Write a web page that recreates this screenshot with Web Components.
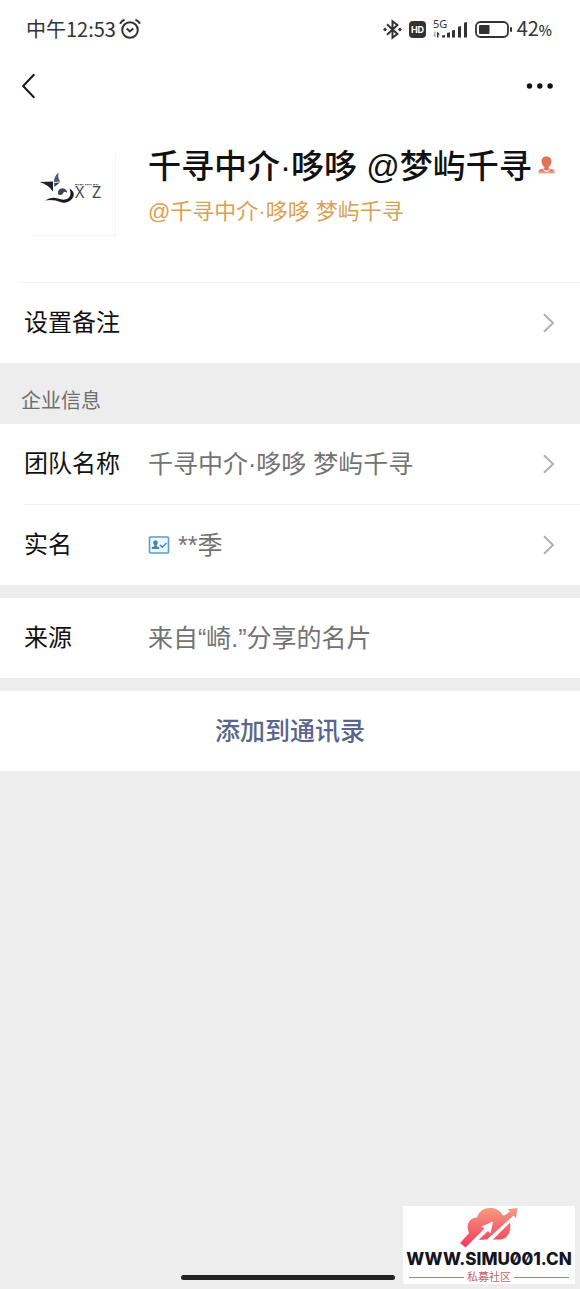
<!DOCTYPE html>
<html lang="zh-CN">
<head>
<meta charset="utf-8">
<meta name="viewport" content="width=device-width, initial-scale=1">
<title>联系人资料</title>
<style>
  body {
    margin: 0;
    background: #ededed;
    color: #111;
    font-family: "Liberation Sans", "Noto Sans CJK SC", sans-serif;
  }
</style>
</head>
<body>
<contact-page></contact-page>

<script>
  class Base extends HTMLElement {
    constructor() {
      super();
      this.attachShadow({ mode: 'open' }).innerHTML = this.view();
    }
    view() { return ''; }
  }

  customElements.define('status-bar', class extends Base {
    view() {
      return `
<style>
  :host { display: flex; align-items: center; height: 58px; padding: 0 28px 0 26px; font-family: "Noto Sans CJK SC", sans-serif; font-size: 20px; line-height: 28px; color: #333; }
  svg { display: block; flex: none; }
  .alarm { margin-left: 3px; }
  .right { display: flex; align-items: center; gap: 7px; margin-left: auto; }
  .charge { margin-left: -2px; }
  small { font-size: 14px; font-weight: 500; }
</style>
<span>中午12:53</span>
<svg class="alarm" width="22" height="22" viewBox="0 0 22 22" fill="none" stroke="#333" stroke-width="2">
  <circle cx="11" cy="12" r="7.8"/><path d="M7.8 10.6 10.8 13.4 14.3 10.4M1 5.8Q2.6 3 5.6 1.7M21 5.8Q19.4 3 16.4 1.7"/>
</svg>
<div class="right">
  <svg width="19" height="21" viewBox="0 0 19 21" fill="none" stroke="#333" stroke-width="2">
    <path d="M4 5.3 14.4 15 9.5 18.8V2.2L14.4 6 4 15.7"/>
    <path fill="#333" stroke="none" d="M2 8.4 4.1 10.5 2 12.6 0 10.5ZM17 8.4l2 2.1-2 2.1-2.1-2.1Z"/>
  </svg>
  <svg width="17" height="17" viewBox="0 0 17 17">
    <rect width="17" height="17" rx="4" fill="#333"/>
    <text x="8.5" y="12" text-anchor="middle" font-family="Inter, sans-serif" font-weight="700" font-size="9" fill="#fff">HD</text>
  </svg>
  <svg width="35" height="28" viewBox="0 0 35 28" fill="#333">
    <text x="0" y="13" font-family="Noto Sans, sans-serif" font-size="11">5G</text>
    <path d="M9 22.500V20.500l3-.5v2.500ZM14 22.500v-4.500l3-.8v5.300ZM19 22.500v-7l3-.8v7.800ZM25 22.500V11.700l3-.8v11.600ZM31 22.500V7.800l3-.8v15.500Z"/>
    <path d="M4 22.500v-6l3 3H5.500v3Z"/><path fill="#999" d="M2.500 16.500v6L0 20h1.300v-3.500Z"/>
  </svg>
  <svg width="37" height="17" viewBox="0 0 37 17">
    <rect x="1" y="1" width="32" height="15" rx="4.500" fill="none" stroke="#333" stroke-width="1.800"/>
    <rect x="4" y="4" width="10.500" height="9" rx="1" fill="#333"/><rect x="35" y="6" width="2" height="5" rx="1" fill="#333"/>
  </svg>
  <span class="charge">42<small>%</small></span>
</div>`;
    }
  });

  customElements.define('nav-bar', class extends Base {
    view() {
      return `
<style>
  :host { display: flex; justify-content: space-between; align-items: center; height: 56px; padding: 0 20px 0 16px; }
  button { display: grid; place-items: center; height: 44px; padding: 0 6px; border: 0; background: none; }
  svg { display: block; }
</style>
<button type="button" aria-label="返回"><svg width="14" height="26" viewBox="0 0 14 26" fill="none" stroke="#1a1a1a" stroke-width="2"><path d="M12.300 1.200 1.200 13l11.100 11.800"/></svg></button>
<button type="button" aria-label="更多"><svg width="28" height="6" viewBox="0 0 28 6" fill="#111"><circle cx="3.500" cy="3" r="2.700"/><circle cx="13.800" cy="3" r="2.700"/><circle cx="24.100" cy="3" r="2.700"/></svg></button>`;
    }
  });

  customElements.define('profile-avatar', class extends Base {
    view() {
      return `
<style>
  :host { display: block; width: 86px; height: 84px; box-sizing: border-box; border: 1px solid #fff; border-right-color: #f6f6f6; border-bottom-color: #f6f6f6; }
  svg { display: block; }
</style>
<svg width="84" height="82" viewBox="0 0 84 82" role="img" aria-label="头像">
  <path fill="#1d222c" d="M8.500 29 22 28.500V38.500Q17 31.500 8.500 29Z"/>
  <path fill="#4d5c6c" d="M27.500 19.500Q26.500 26 29.500 28.500L23 29V27.500Q23.500 23 27.500 19.500Z"/>
  <path fill="#3c4856" d="M23 30 29 29.300 23.500 34Z"/>
  <path fill="#3b4654" d="M27 41Q26.500 35.500 31.500 35.300 36 36 36.200 40 33 37 31.300 41.600 28.200 42.600 27 41Z"/>
  <path fill="#171b23" d="M14 47.500Q20 43.500 27 45.500 33 47.800 37 45.500 41 42.500 38.500 35.500 44 38.500 42.500 43.500 39 50.500 31 49.500 22 46 14 47.500Z"/>
  <g fill="#3f4650" font-family="Noto Sans, sans-serif"><text x="44" y="45" font-size="16">X</text><text x="61" y="45" font-size="16">Z</text></g>
  <g stroke="#6b717a" stroke-width="1.300"><path stroke-dasharray="2 .5" d="M44 31.700h8.500"/><path stroke-dasharray="1.500 .6" d="M54 31.700h7"/><path stroke-dasharray="2 .5" d="M62 31.700h5.500"/></g>
</svg>`;
    }
  });

  customElements.define('profile-header', class extends Base {
    view() {
      return `
<style>
  :host { display: flex; gap: 32px; height: 168px; padding: 0 0 0 30px; }
  profile-avatar { margin-top: 38px; flex: none; }
  .info { flex: 1; min-width: 0; margin-top: 30px; white-space: nowrap; }
  h1 { display: flex; align-items: center; gap: 6px; margin: 0; font-size: 33px; line-height: 46px; font-weight: 500; }
  p { margin: 7px 0 0; font-size: 22px; line-height: 30px; color: #dca052; }
  svg { display: block; flex: none; margin-bottom: 4px; }
</style>
<profile-avatar></profile-avatar>
<div class="info">
  <h1><slot name="name"></slot>
    <svg width="17" height="18" viewBox="0 0 17 18" fill="#e2725a" role="img" aria-label="个人"><path d="M8.500.5c3 0 5 2 5 4.800 0 2.500-1.200 4.500-2.800 5.800v1.300l4.300 1.100q1.500.5 1.500 2.200H.5q0-1.700 1.500-2.200l4.300-1.100v-1.300C4.700 9.800 3.500 7.800 3.500 5.300 3.500 2.500 5.500.5 8.500.5Z"/><path d="M.5 16.300h16v1h-16z"/><path fill="#fff" d="M4.500 13.400h1.400l2.600 1.400 2.600-1.400h1.400l-3 2.300h-2z"/></svg>
  </h1>
  <p><slot name="alias"></slot></p>
</div>`;
    }
  });

  customElements.define('info-row', class extends Base {
    static get observedAttributes() { return ['label']; }
    attributeChangedCallback(n, o, v) { this.shadowRoot.querySelector('.label').textContent = v; }
    view() {
      return `
<style>
  :host { display: block; background: #fff; }
  .row { display: flex; align-items: center; box-sizing: border-box; width: 100%; height: 80px; padding: 0 25px 0 24px; border: 0; background: none; font: inherit; font-size: 24px; line-height: 36px; color: #111; text-align: left; }
  .label { flex: none; width: 124px; }
  .value { flex: 1; display: flex; align-items: center; gap: 8px; font-size: 25px; color: #737373; }
  svg { display: block; flex: none; }
  :host([plain]) svg { display: none; }
</style>
<button type="button" class="row">
  <span class="label"></span><span class="value"><slot></slot></span>
  <svg width="13" height="20" viewBox="0 0 13 20" fill="none" stroke="#b0b0b0" stroke-width="2"><path d="m2 1.300 9 8.700-9 8.700"/></svg>
</button>`;
    }
  });

  customElements.define('id-badge', class extends Base {
    view() {
      return `
<style>:host { display: block; } svg { display: block; }</style>
<svg width="22" height="18" viewBox="0 0 22 18" role="img" aria-label="已实名">
  <rect x="1.500" y="1" width="19" height="16" rx="1" fill="#eff8fe" stroke="#5f9bc6" stroke-width="1.600"/>
  <path fill="#4c82ad" d="M7.500 4.300c1.500 0 2.300 1 2.300 2.300 0 1.200-.5 1.900-1.100 2.400v1.300l2.500 1v1.700H3.800v-1.700l2.500-1V9c-.6-.5-1.100-1.200-1.100-2.400 0-1.300.8-2.300 2.300-2.300Z"/>
  <path fill="none" stroke="#4c82ad" stroke-width="1.400" d="m12 9 2.300 2.300 4.200-4.200"/>
</svg>`;
    }
  });

  customElements.define('row-group', class extends Base {
    view() {
      return `
<style>
  :host { display: block; background: #fff; }
  ::slotted(info-row:not(:first-of-type)) { padding-top: 1px; background: linear-gradient(#f0f0f0, #f0f0f0) 24px 0 / 100% 1px no-repeat #fff; }
</style><slot></slot>`;
    }
  });

  customElements.define('section-title', class extends Base {
    view() {
      return `
<style>
  :host { display: block; padding: 23px 21px 8px; }
  h2 { margin: 0; font-size: 20px; line-height: 30px; font-weight: 400; color: #6f6f6f; }
</style><h2><slot></slot></h2>`;
    }
  });

  customElements.define('add-button', class extends Base {
    view() {
      return `
<style>
  :host { display: block; }
  button { display: block; width: 100%; height: 80px; border: 0; background: #fff; font: inherit; font-size: 25px; line-height: 36px; font-weight: 500; color: #59668c; }
</style><button type="button"><slot></slot></button>`;
    }
  });

  customElements.define('site-mark', class extends Base {
    view() {
      return `
<style>
  :host { display: flex; flex-direction: column; align-items: center; width: 172px; height: 78px; background: #fff; }
  svg { display: block; margin-top: 2px; }
  b { font: 800 17px/22px Inter, sans-serif; font-feature-settings: "zero"; color: #15141f; white-space: nowrap; }
  .sub { display: flex; align-items: center; gap: 3px; align-self: stretch; padding: 0 6px; font-size: 11px; line-height: 14px; color: #c4636b; }
  .sub::before, .sub::after { content: ""; flex: 1; height: 1px; background: #cf7479; }
</style>
<svg width="58" height="40" viewBox="0 0 58 40" aria-hidden="true">
  <defs><linearGradient id="g" gradientUnits="userSpaceOnUse" x1="0" y1="0" x2="0" y2="38"><stop offset="0" stop-color="#f59a80"/><stop offset="1" stop-color="#f53d5f"/></linearGradient></defs>
  <path fill="url(#g)" d="M9 25C5 16 10 9.500 17 9.500 19 3 24 0 30 0c6 0 10 2.500 12 6.500C50 10 52 18 49.500 24 47.500 29 44 31.500 39 31.500H16Z"/>
  <path fill="#fff" d="M23 32.500 55 3V9.500L32 32.500Z"/>
  <path fill="url(#g)" d="M13 31.500 38 12 50 3.500 47.500 1.200 57.500 0 56 10 53.500 7.500 27 31.500Z"/>
  <path fill="url(#g)" d="M0 35 10 24 20 18 24 21 5.500 39.500Z"/>
  <path fill="#fff" d="M11 34 24.500 20.500 21.500 18.500 33 13.500 30.500 25.500 28 23 18 32.500H13.500Z"/>
</svg>
<b>WWW.SIMU001.CN</b>
<div class="sub">私募社区</div>`;
    }
  });

  customElements.define('contact-page', class extends Base {
    view() {
      return `
<style>
  :host { display: flex; flex-direction: column; min-height: 100vh; }
  header { background: #fff; }
  main { display: flex; flex-direction: column; gap: 13px; }
  .top { background: #fff; }
  .line { height: 1px; margin-left: 21px; background: #f0f0f0; }
  .home { position: fixed; left: 50%; bottom: 9px; width: 214px; height: 5px; margin-left: -109px; border-radius: 3px; background: #222; }
  site-mark { position: fixed; right: 5px; bottom: 5px; }
</style>
<header>
  <status-bar></status-bar>
  <nav-bar></nav-bar>
</header>
<main>
  <div>
    <div class="top">
      <profile-header><span slot="name">千寻中介·哆哆 @梦屿千寻</span><span slot="alias">@千寻中介·哆哆 梦屿千寻</span></profile-header>
      <div class="line"></div>
      <info-row label="设置备注"></info-row>
    </div>
    <section-title>企业信息</section-title>
    <row-group>
      <info-row label="团队名称">千寻中介·哆哆 梦屿千寻</info-row>
      <info-row label="实名"><id-badge></id-badge>**季</info-row>
    </row-group>
  </div>
  <info-row label="来源" plain>来自“崎.”分享的名片</info-row>
  <add-button>添加到通讯录</add-button>
</main>
<div class="home"></div>
<site-mark></site-mark>`;
    }
  });
</script>
</body>
</html>
